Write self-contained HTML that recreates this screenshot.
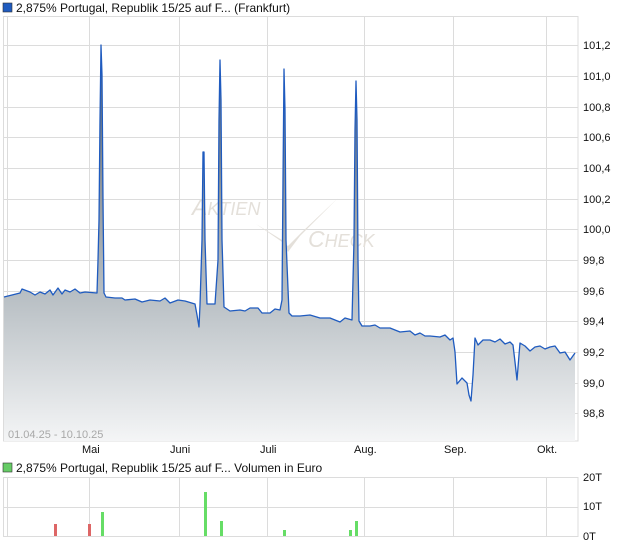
<!DOCTYPE html>
<html><head><style>
body{margin:0;background:#fff;width:620px;height:546px;overflow:hidden;font-family:"Liberation Sans",sans-serif;}
svg text{font-family:"Liberation Sans",sans-serif;}
</style></head><body>
<svg width="620" height="546" viewBox="0 0 620 546" xmlns="http://www.w3.org/2000/svg">
<defs>
<linearGradient id="g" x1="0" y1="45" x2="0" y2="441" gradientUnits="userSpaceOnUse">
<stop offset="0" stop-color="#5f6468"/><stop offset="0.62" stop-color="#b6bdc2"/><stop offset="1" stop-color="#f4f5f6"/>
</linearGradient>
</defs>
<rect x="3" y="3" width="9" height="9" fill="#1f5bbf" stroke="#333" stroke-width="0.6"/>
<text x="16" y="12" font-size="12" fill="#111">2,875% Portugal, Republik 15/25 auf F... (Frankfurt)</text>
<g stroke="#dcdcdc" stroke-width="1" fill="none">
<line x1="3" y1="45.5" x2="578" y2="45.5"/><line x1="3" y1="76.5" x2="578" y2="76.5"/><line x1="3" y1="107.5" x2="578" y2="107.5"/><line x1="3" y1="137.5" x2="578" y2="137.5"/><line x1="3" y1="168.5" x2="578" y2="168.5"/><line x1="3" y1="199.5" x2="578" y2="199.5"/><line x1="3" y1="229.5" x2="578" y2="229.5"/><line x1="3" y1="260.5" x2="578" y2="260.5"/><line x1="3" y1="291.5" x2="578" y2="291.5"/><line x1="3" y1="321.5" x2="578" y2="321.5"/><line x1="3" y1="352.5" x2="578" y2="352.5"/><line x1="3" y1="383.5" x2="578" y2="383.5"/><line x1="3" y1="413.5" x2="578" y2="413.5"/>
<line x1="89.5" y1="16" x2="89.5" y2="441"/><line x1="179.5" y1="16" x2="179.5" y2="441"/><line x1="267.5" y1="16" x2="267.5" y2="441"/><line x1="364.5" y1="16" x2="364.5" y2="441"/><line x1="453.5" y1="16" x2="453.5" y2="441"/><line x1="546.5" y1="16" x2="546.5" y2="441"/>
<rect x="3.5" y="16.5" width="574.5" height="424.5"/><line x1="7.5" y1="16" x2="7.5" y2="441"/>
</g>
<g fill="#e4e0da" font-style="italic">
<text x="192" y="215" font-size="23">A<tspan font-size="18">KTIEN</tspan></text>
<text x="308" y="247" font-size="23">C<tspan font-size="18">HECK</tspan></text>
<path d="M256 224 L282 240 L288 252 L300 236 L338 198 L302 232 L288 246 Z"/>
</g>
<path id="d" fill="url(#g)" stroke="none" d="M4 297 L12 295 L16 294 L20 293 L22 289 L30 292 L35 295 L40 292 L45 294 L50 290 L53 295 L58 288 L62 294 L65 290 L70 292 L75 289 L80 293 L85 292 L97 293 L98 260 L99 220 L100 120 L101 45 L102 75 L103 200 L104 293 L106 297 L115 298 L122 298 L125 300 L135 299 L142 302 L150 300 L160 301 L165 298 L170 303 L178 300 L185 301 L195 304 L197 315 L199 327 L200 305 L202 240 L203 152 L204 152 L205 240 L207 304 L215 304 L218 260 L219 120 L220 60 L221 100 L222 240 L224 307 L230 311 L240 310 L245 311 L250 308 L258 308 L262 313 L270 313 L275 309 L280 310 L282 300 L283 180 L284 69 L285 110 L286 240 L289 313 L292 316 L300 316 L310 315 L320 318 L330 318 L340 322 L345 318 L352 320 L354 240 L355 130 L356 81 L357 120 L358 260 L359 321 L362 326 L370 326 L375 325 L380 328 L390 328 L400 332 L410 331 L415 335 L420 333 L425 336 L430 336 L440 337 L445 335 L450 340 L453 338 L455 352 L457 384 L462 378 L467 383 L469 395 L471 401 L473 375 L475 338 L478 345 L483 340 L490 340 L495 342 L500 339 L505 344 L510 342 L513 345 L515 362 L517 380 L519 355 L520 343 L525 346 L530 351 L535 347 L540 346 L545 349 L550 347 L555 346 L560 353 L565 352 L570 360 L575 353 L575 441 L4 441 Z"/>
<path fill="none" stroke="#1f5bbf" stroke-width="1.3" stroke-linejoin="round" d="M4 297 L12 295 L16 294 L20 293 L22 289 L30 292 L35 295 L40 292 L45 294 L50 290 L53 295 L58 288 L62 294 L65 290 L70 292 L75 289 L80 293 L85 292 L97 293 L98 260 L99 220 L100 120 L101 45 L102 75 L103 200 L104 293 L106 297 L115 298 L122 298 L125 300 L135 299 L142 302 L150 300 L160 301 L165 298 L170 303 L178 300 L185 301 L195 304 L197 315 L199 327 L200 305 L202 240 L203 152 L204 152 L205 240 L207 304 L215 304 L218 260 L219 120 L220 60 L221 100 L222 240 L224 307 L230 311 L240 310 L245 311 L250 308 L258 308 L262 313 L270 313 L275 309 L280 310 L282 300 L283 180 L284 69 L285 110 L286 240 L289 313 L292 316 L300 316 L310 315 L320 318 L330 318 L340 322 L345 318 L352 320 L354 240 L355 130 L356 81 L357 120 L358 260 L359 321 L362 326 L370 326 L375 325 L380 328 L390 328 L400 332 L410 331 L415 335 L420 333 L425 336 L430 336 L440 337 L445 335 L450 340 L453 338 L455 352 L457 384 L462 378 L467 383 L469 395 L471 401 L473 375 L475 338 L478 345 L483 340 L490 340 L495 342 L500 339 L505 344 L510 342 L513 345 L515 362 L517 380 L519 355 L520 343 L525 346 L530 351 L535 347 L540 346 L545 349 L550 347 L555 346 L560 353 L565 352 L570 360 L575 353"/>
<g font-size="11" fill="#111">
<text x="583" y="49">101,2</text><text x="583" y="80">101,0</text><text x="583" y="111">100,8</text><text x="583" y="141">100,6</text><text x="583" y="172">100,4</text><text x="583" y="203">100,2</text><text x="583" y="233">100,0</text><text x="583" y="264">99,8</text><text x="583" y="295">99,6</text><text x="583" y="325">99,4</text><text x="583" y="356">99,2</text><text x="583" y="387">99,0</text><text x="583" y="417">98,8</text>
<text x="82" y="453">Mai</text><text x="170" y="453">Juni</text><text x="260" y="453">Juli</text><text x="354" y="453">Aug.</text><text x="444" y="453">Sep.</text><text x="537" y="453">Okt.</text>
</g>
<text x="8" y="438" font-size="11" fill="#a8a8a8">01.04.25 - 10.10.25</text>
<rect x="3" y="463" width="9" height="9" fill="#66cc66" stroke="#333" stroke-width="0.6"/>
<text x="16" y="472" font-size="12" fill="#111">2,875% Portugal, Republik 15/25 auf F... Volumen in Euro</text>
<g stroke="#dcdcdc" stroke-width="1" fill="none">
<line x1="3" y1="507.5" x2="578" y2="507.5"/>
<line x1="89.5" y1="477" x2="89.5" y2="536"/><line x1="179.5" y1="477" x2="179.5" y2="536"/><line x1="267.5" y1="477" x2="267.5" y2="536"/><line x1="364.5" y1="477" x2="364.5" y2="536"/><line x1="453.5" y1="477" x2="453.5" y2="536"/><line x1="546.5" y1="477" x2="546.5" y2="536"/>
<rect x="3.5" y="477.5" width="574.5" height="59"/><line x1="7.5" y1="477" x2="7.5" y2="536"/>
</g>
<g fill="#dd6666"><rect x="54" y="524" width="3" height="12"/><rect x="88" y="524" width="3" height="12"/></g>
<g fill="#66dd66"><rect x="101" y="512" width="3" height="24"/><rect x="204" y="492" width="3" height="44"/><rect x="220" y="521" width="3" height="15"/><rect x="283" y="530" width="3" height="6"/><rect x="349" y="530" width="3" height="6"/><rect x="355" y="521" width="3" height="15"/></g>
<g font-size="11" fill="#111"><text x="583" y="481">20T</text><text x="583" y="510">10T</text><text x="583" y="540">0T</text></g>
</svg>
</body></html>
